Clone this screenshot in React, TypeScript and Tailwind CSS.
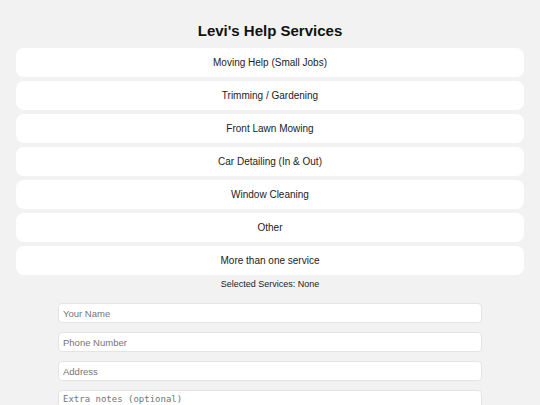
import { useState } from "react";

const services = [
  "Moving Help (Small Jobs)",
  "Trimming / Gardening",
  "Front Lawn Mowing",
  "Car Detailing (In & Out)",
  "Window Cleaning",
  "Other",
  "More than one service",
];

export default function App() {
  const [selected, setSelected] = useState<string[]>([]);

  const toggle = (s: string) => {
    setSelected((prev) =>
      prev.includes(s) ? prev.filter((x) => x !== s) : [...prev, s]
    );
  };

  return (
    <main className="min-h-screen w-full bg-[#f2f2f2] font-['Liberation_Sans',Arial,sans-serif] text-[#222]">
      <h1 className="pt-[22px] text-center text-[15px] font-bold leading-[18px] text-[#111]">
        Levi's Help Services
      </h1>

      {/* Service buttons */}
      <div className="mt-[8px] flex flex-col gap-1 px-4">
        {services.map((s) => (
          <button
            key={s}
            onClick={() => toggle(s)}
            className="h-[29px] w-full rounded-lg bg-white text-center text-[10px] text-[#222]"
          >
            {s}
          </button>
        ))}
      </div>

      <p className="mt-1 text-center text-[9px] leading-[11px] text-[#222]">
        Selected Services: {selected.length ? selected.join(", ") : "None"}
      </p>

      {/* Form */}
      <div className="mx-auto mt-[13px] flex w-[424px] flex-col gap-[9px]">
        <input
          placeholder="Your Name"
          className="h-[20px] w-full rounded-[4px] border border-[#e4e4e4] bg-white px-[4px] text-[9.5px] placeholder:text-[#757575] outline-none"
        />
        <input
          placeholder="Phone Number"
          className="h-[20px] w-full rounded-[4px] border border-[#e4e4e4] bg-white px-[4px] text-[9.5px] placeholder:text-[#757575] outline-none"
        />
        <input
          placeholder="Address"
          className="h-[20px] w-full rounded-[4px] border border-[#e4e4e4] bg-white px-[4px] text-[9.5px] placeholder:text-[#757575] outline-none"
        />
        <textarea
          placeholder="Extra notes (optional)"
          className="h-[44px] w-full resize-none rounded-[4px] border border-[#e4e4e4] bg-white px-[4px] py-[2px] font-['DejaVu_Sans_Mono',monospace] text-[9px] leading-[12px] placeholder:text-[#757575] outline-none"
        />
      </div>
    </main>
  );
}
